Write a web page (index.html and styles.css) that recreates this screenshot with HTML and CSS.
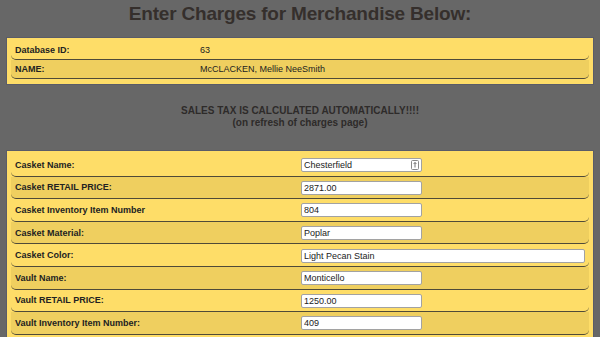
FILE: index.html
```html
<!DOCTYPE html>
<html lang="en">
<head>
    <meta charset="UTF-8">
    <title>Enter Charges</title>
    <link rel="stylesheet" href="styles.css">
</head>
<body>
    <h1 class="page-title">Enter Charges for Merchandise Below:</h1>

    <div class="panel panel-info">
        <div class="row">
            <span class="label">Database ID:</span>
            <span class="value">63</span>
        </div>
        <div class="row">
            <span class="label">NAME:</span>
            <span class="value">McCLACKEN, Mellie NeeSmith</span>
        </div>
    </div>

    <p class="notice">
        SALES TAX IS CALCULATED AUTOMATICALLY!!!!<br>
        (on refresh of charges page)
    </p>

    <form class="panel panel-charges">
        <div class="row">
            <label class="label" for="casketName">Casket Name:</label>
            <span class="field">
                <input type="text" id="casketName" value="Chesterfield">
                <svg class="autofill" width="8" height="10" viewBox="0 0 8 10">
                    <rect x="0.5" y="0.5" width="7" height="9" rx="1" fill="#fff" stroke="#8a8a8a"/>
                    <path d="M4 2.5 V7.5 M2.6 4 L4 2.5 L5.4 4" fill="none" stroke="#666" stroke-width="0.9"/>
                </svg>
            </span>
        </div>
        <div class="row">
            <label class="label" for="casketPrice">Casket RETAIL PRICE:</label>
            <input type="text" id="casketPrice" value="2871.00">
        </div>
        <div class="row">
            <label class="label" for="casketItem">Casket Inventory Item Number</label>
            <input type="text" id="casketItem" value="804">
        </div>
        <div class="row">
            <label class="label" for="casketMaterial">Casket Material:</label>
            <input type="text" id="casketMaterial" value="Poplar">
        </div>
        <div class="row">
            <label class="label" for="casketColor">Casket Color:</label>
            <input type="text" id="casketColor" class="wide" value="Light Pecan Stain">
        </div>
        <div class="row">
            <label class="label" for="vaultName">Vault Name:</label>
            <input type="text" id="vaultName" value="Monticello">
        </div>
        <div class="row">
            <label class="label" for="vaultPrice">Vault RETAIL PRICE:</label>
            <input type="text" id="vaultPrice" value="1250.00">
        </div>
        <div class="row">
            <label class="label" for="vaultItem">Vault Inventory Item Number:</label>
            <input type="text" id="vaultItem" value="409">
        </div>
    </form>
</body>
</html>
```

FILE: styles.css
```css
body {
    margin: 0;
    padding: 0;
    background-color: #676767;
    font-family: "Liberation Sans", Arial, sans-serif;
    color: #222;
}

.page-title {
    margin: 3px 0 12px;
    font-size: 19px;
    line-height: 22px;
    letter-spacing: -0.2px;
    text-align: center;
    color: #352f2c;
}

/* Yellow panels */
.panel {
    margin: 0 6px;
    padding: 3px 4px 5px;
    background-color: #fedd68;
    border: 1px solid #5a5c68;
}

.row {
    display: grid;
    align-items: center;
    padding: 0 4px;
    border-bottom: 1px solid #4f4a38;
    border-radius: 0 0 5px 5px;
    box-sizing: border-box;
    font-size: 9px;
}

.row:nth-child(even) {
    background-color: #efcf5f;
}

.label {
    font-weight: bold;
}

.panel-info .row {
    grid-template-columns: 185px 1fr;
    height: 19px;
}

.panel-charges .row {
    grid-template-columns: 286px 1fr;
    height: 22.6px;
}

.notice {
    margin: 20px 0 21px;
    font-size: 10px;
    line-height: 12px;
    font-weight: bold;
    text-align: center;
    color: #2e2b2a;
}

/* Inputs */
input {
    width: 121px;
    height: 14px;
    box-sizing: border-box;
    margin: 1px 0 0;
    padding: 0 2px;
    border: 1px solid #a2a2a2;
    border-radius: 2px;
    background: #fff;
    font-family: "Liberation Sans", Arial, sans-serif;
    font-size: 9px;
    color: #222;
}

input.wide {
    width: 284px;
}

.field {
    position: relative;
    display: block;
    width: 121px;
    height: 15px;
}

.autofill {
    position: absolute;
    top: 3px;
    left: 110px;
}
```
